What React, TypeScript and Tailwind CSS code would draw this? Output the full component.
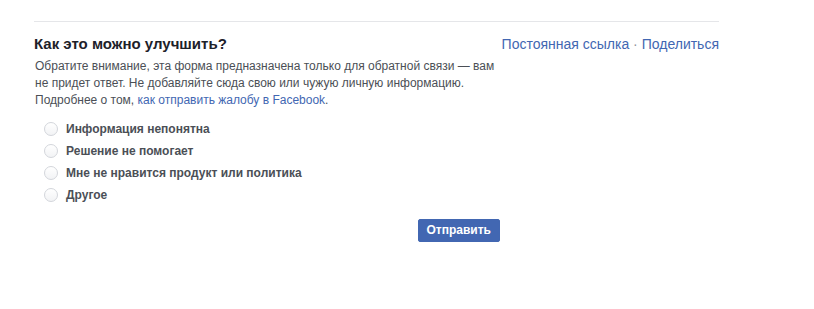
import React from "react";

const options = [
  "Информация непонятна",
  "Решение не помогает",
  "Мне не нравится продукт или политика",
  "Другое",
];

export default function App() {
  return (
    <div className="w-[814px] h-[309px] bg-white" style={{ fontFamily: '"Liberation Sans", Arial, sans-serif' }}>
      <div className="ml-[34px] w-[685px] pt-[21px]">
        <div className="border-t border-[#e5e6e9]" />
        <div className="flex items-baseline justify-between pt-[12px]">
          <div className="text-[15px] leading-[20px] font-bold text-[#1d2129]">Как это можно улучшить?</div>
          <div className="text-[14px] leading-[20px] text-[#4267b2]">
            <span>Постоянная ссылка</span>
            <span className="text-[#90949c]"> · </span>
            <span>Поделиться</span>
          </div>
        </div>
        <div className="w-[466px]">
          <p className="mt-[4px] pl-px text-[12px] leading-[17px] text-[#4b4f56]">
            Обратите внимание, эта форма предназначена только для обратной связи — вам
            <br />
            не придет ответ. Не добавляйте сюда свою или чужую личную информацию.
            <br />
            Подробнее о том, <span className="text-[#4267b2]">как отправить жалобу в Facebook</span>.
          </p>
          <div className="mt-[12px] flex flex-col gap-[6px] pl-[10px]">
            {options.map((o) => (
              <label key={o} className="flex items-center h-[16px]">
                <span className="w-[14px] h-[14px] rounded-full border border-[#d3d6db] bg-gradient-to-b from-[#ffffff] to-[#f2f3f5] shrink-0" />
                <span className="ml-[8px] text-[12px] font-bold text-[#4b4f56]">{o}</span>
              </label>
            ))}
          </div>
          <div className="flex justify-end mt-[16px]">
            <button className="h-[23px] px-[8px] rounded-[2px] bg-[#4267b2] border border-[#4267b2] text-white text-[12px] font-bold leading-[21px]">
              Отправить
            </button>
          </div>
        </div>
      </div>
    </div>
  );
}
